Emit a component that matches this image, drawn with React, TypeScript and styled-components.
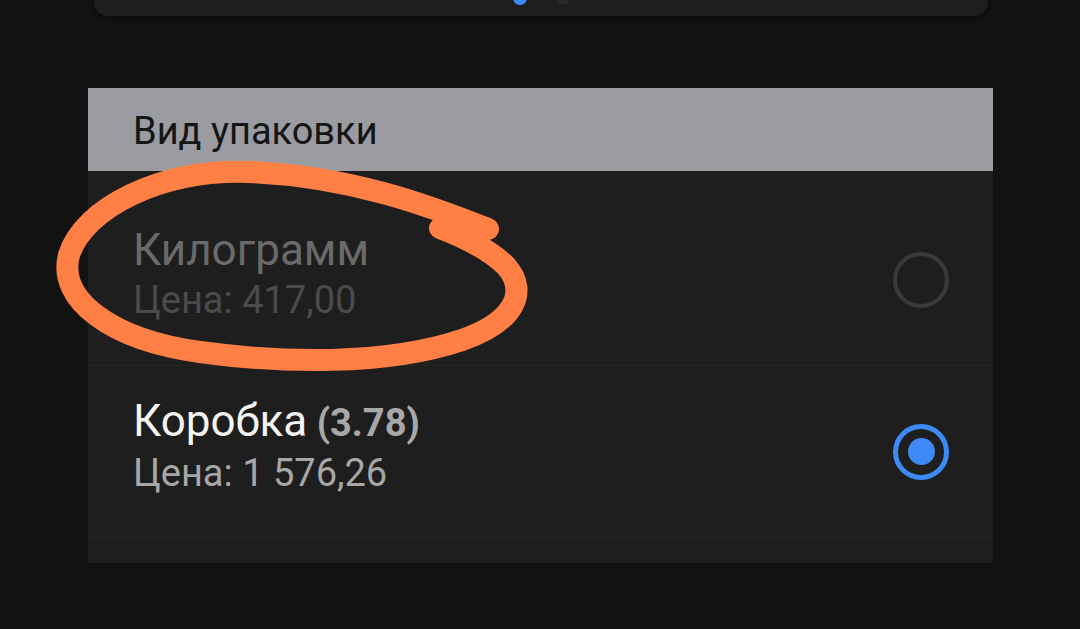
import React from 'react';
import styled, { createGlobalStyle } from 'styled-components';

/* ------------------------------ Global styles ----------------------------- */
const GlobalStyle = createGlobalStyle`
  html, body {
    margin: 0;
    padding: 0;
    background: #121212;
    font-family: Roboto, 'Noto Sans', 'Liberation Sans', sans-serif;
  }
`;

type Pack = {
  name: string;
  ratio?: string;
  price: string;
  disabled?: boolean;
  checked?: boolean;
};

const packs: Pack[] = [
  { name: 'Килограмм', price: '417,00', disabled: true },
  { name: 'Коробка', ratio: '(3.78)', price: '1 576,26', checked: true },
];

const App = () => {
  return (
    <Screen>
      <GlobalStyle />
      <Carousel>
        <Dot active />
        <Dot />
      </Carousel>

      <Section aria-label="Вид упаковки">
        <SectionHeader>Вид упаковки</SectionHeader>
        <List>
          {packs.map((p) => (
            <Row key={p.name}>
              <Texts>
                <Title disabled={p.disabled}>
                  {p.name}
                  {p.ratio && <Ratio> {p.ratio}</Ratio>}
                </Title>
                <Price disabled={p.disabled}>Цена: {p.price}</Price>
              </Texts>
              <Radio checked={p.checked} />
            </Row>
          ))}
        </List>
      </Section>

      {/* hand drawn marker over the screenshot */}
      <Scribble viewBox="0 0 1080 629" aria-hidden="true">
        <path
          d="M488 229 C430 206, 350 176, 250 172 C160 169, 84 208, 69 255 C57 300, 112 340, 200 352 C280 363, 385 366, 462 340 C512 323, 530 293, 506 266 C490 250, 466 238, 440 228"
          fill="none"
          stroke="#ff7f45"
          strokeWidth={22}
          strokeLinecap="round"
          strokeLinejoin="round"
        />
      </Scribble>
    </Screen>
  );
};

const Screen = styled.div`
  position: relative;
  width: 1080px;
  height: 629px;
  overflow: hidden;
  background: #121212;
`;

const Carousel = styled.div`
  width: 894px;
  height: 60px;
  margin: -44px 0 0 94px;
  box-sizing: border-box;
  padding-bottom: 11px;
  background: #1e1e1e;
  border-radius: 0 0 14px 14px;
  box-shadow: 0 2px 4px rgba(0, 0, 0, 0.45);
  display: flex;
  align-items: flex-end;
  justify-content: center;
  gap: 29px;
`;

const Dot = styled.span<{ active?: boolean }>`
  width: 14px;
  height: 14px;
  border-radius: 50%;
  background: ${(p) => (p.active ? '#3d8af7' : '#2a2a2a')};
`;

const Section = styled.section`
  width: 905px;
  margin: 72px 0 0 88px;
  background: #1e1e1e;
  padding-bottom: 25px;
`;

const SectionHeader = styled.h3`
  margin: 0;
  height: 83px;
  padding-left: 45px;
  display: flex;
  align-items: center;
  background: #9a9ca2;
  color: #151515;
  font-size: 38px;
  font-weight: 400;
  padding-top: 2px;
  box-sizing: border-box;
`;

const List = styled.div`
  padding-top: 23px;
`;

const Row = styled.div`
  height: 172px;
  box-sizing: border-box;
  padding: 0 44px 0 45px;
  display: flex;
  align-items: center;
  justify-content: space-between;
  border-bottom: 1px solid #252525;
`;

const Texts = styled.div`
  display: flex;
  flex-direction: column;
  margin-top: -7px;
`;

const Title = styled.div<{ disabled?: boolean }>`
  font-size: 44px;
  line-height: 48px;
  color: ${(p) => (p.disabled ? '#6a6a6a' : '#f4f4f4')};
`;

const Ratio = styled.span`
  font-size: 38px;
  font-weight: 700;
  color: #a8a8a8;
`;

const Price = styled.div<{ disabled?: boolean }>`
  font-size: 38px;
  line-height: 52px;
  color: ${(p) => (p.disabled ? '#4b4b4b' : '#a7a7a7')};
`;

const Radio = styled.span<{ checked?: boolean }>`
  width: 56px;
  height: 56px;
  box-sizing: border-box;
  border-radius: 50%;
  border: ${(p) => (p.checked ? '5px solid #3d8af7' : '4px solid #3a3a3a')};
  display: flex;
  align-items: center;
  justify-content: center;
  &::after {
    content: '';
    display: ${(p) => (p.checked ? 'block' : 'none')};
    width: 27px;
    height: 27px;
    border-radius: 50%;
    background: #3d8af7;
  }
`;

const Scribble = styled.svg`
  position: absolute;
  inset: 0;
  width: 1080px;
  height: 629px;
  pointer-events: none;
`;

export default App;
